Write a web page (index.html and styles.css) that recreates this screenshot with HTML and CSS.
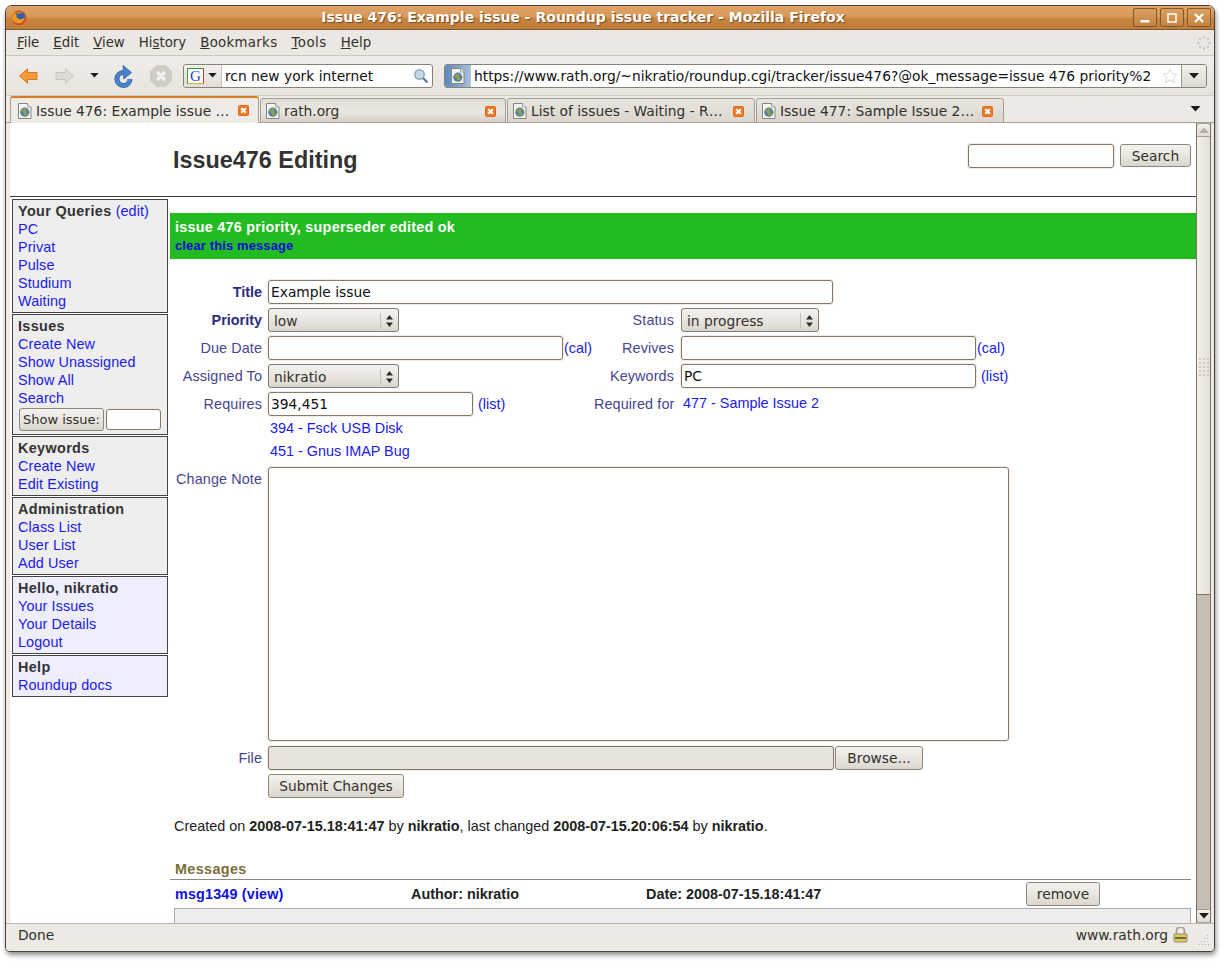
FILE: index.html
```html
<!DOCTYPE html>
<html lang="en">
<head>
    <meta charset="UTF-8">
    <title>Issue 476: Example issue - Roundup issue tracker - Mozilla Firefox</title>
    <link rel="stylesheet" href="styles.css">
</head>
<body>
    <svg class="defs" width="0" height="0">
        <symbol id="favicon" viewBox="0 0 16 16">
            <path d="M1.500 .5h9l3.500 3.500v11.500h-12.500z" fill="#f4f4f2" stroke="#85857f"/>
            <path d="M10.500 .5v3.500h3.500" fill="#fff" stroke="#9a9a9a"/>
            <circle cx="7.800" cy="9.200" r="4.600" fill="#55809f"/>
            <path d="M4.500 8c1-2.200 3.200-2.700 5-1.700.9.900-.5 1.300-.5 2.400s1.700.9 2 1.700c-.6 1.700-2.200 2.400-3.600 2.200-1.100-1.100-.4-2-1.100-3-.6-.6-1.400-.6-1.800-1.600z" fill="#8aa04e"/>
        </symbol>
        <symbol id="tabclose" viewBox="0 0 11 11">
            <rect x=".5" y=".5" width="10" height="10" rx="1" fill="#f0782a" stroke="#e46a16"/>
            <path d="M3.200 3.200l4.600 4.600M7.800 3.200l-4.600 4.600" stroke="#fff" stroke-width="2"/>
        </symbol>
        <symbol id="updown" viewBox="0 0 9 14">
            <path d="M4.500 1l3.500 4.500h-7zM4.500 13l-3.500-4.500h7z" fill="#2e2e2e"/>
        </symbol>
        <symbol id="down" viewBox="0 0 10 6">
            <path d="M0 0h10l-5 5.500z" fill="#1c1c1c"/>
        </symbol>
    </svg>

    <div class="window">
        <div class="titlebar">
            <svg class="fox" width="16" height="16" viewBox="0 0 16 16">
                <circle cx="8" cy="8" r="7.500" fill="#c8541a"/>
                <circle cx="8.800" cy="6.500" r="5" fill="#2f5fa8"/>
                <path d="M.8 8.500c.4-3 1.700-5.300 3.700-6.500-.5 1.500 0 2.500 1.500 3-1 1-.5 3 1.500 4 2 .8 4 .2 6-1.800-.2 3.500-3 6.300-6.300 6.100-3.200-.2-5.800-2-6.400-4.800z" fill="#ee9a22"/>
                <path d="M5 2.500c2-1.200 5-1.200 7 .8-2 .2-3.500 0-4.500.7-1 .2-2-.5-2.500-1.500z" fill="#e8791e"/>
            </svg>
            <div class="title-text">Issue 476: Example issue - Roundup issue tracker - Mozilla Firefox</div>
            <div class="wm-buttons">
                <div class="wm-btn"><svg width="12" height="12" viewBox="0 0 12 12"><rect x="1.500" y="8" width="9" height="2.500" fill="#fff"/></svg></div>
                <div class="wm-btn"><svg width="12" height="12" viewBox="0 0 12 12"><rect x="2" y="2" width="8" height="8" fill="none" stroke="#fff" stroke-width="1.500"/></svg></div>
                <div class="wm-btn"><svg width="12" height="12" viewBox="0 0 12 12"><path d="M2 2l8 8M10 2l-8 8" stroke="#fff" stroke-width="2.400"/></svg></div>
            </div>
        </div>

        <div class="menubar">
            <span><u>F</u>ile</span>
            <span><u>E</u>dit</span>
            <span><u>V</u>iew</span>
            <span>Hi<u>s</u>tory</span>
            <span class="menu-wide"><u>B</u>ookmarks</span>
            <span class="menu-wider"><u>T</u>ools</span>
            <span><u>H</u>elp</span>
            <svg class="throbber" width="14" height="14" viewBox="0 0 14 14">
                <g fill="#c9c6c0">
                    <circle cx="7" cy="1.500" r="1.200"/><circle cx="11" cy="3" r="1.200"/><circle cx="12.500" cy="7" r="1.200"/>
                    <circle cx="11" cy="11" r="1.200"/><circle cx="7" cy="12.500" r="1.200"/><circle cx="3" cy="11" r="1.200"/>
                    <circle cx="1.500" cy="7" r="1.200"/><circle cx="3" cy="3" r="1.200"/>
                </g>
            </svg>
        </div>

        <div class="toolbar">
            <svg class="tb-back" width="19" height="16" viewBox="0 0 19 16">
                <path d="M8.500 .8v3.700h9.500v7h-9.500v3.700l-8-7.200z" fill="#f39a3a" stroke="#d77a20"/>
            </svg>
            <svg class="tb-forward" width="19" height="16" viewBox="0 0 19 16">
                <path d="M10.500 .8v3.700h-9.500v7h9.500v3.700l8-7.200z" fill="#dedbd5" stroke="#c9c6c0"/>
            </svg>
            <svg class="tb-drop" width="9" height="5"><use href="#down"/></svg>
            <svg class="tb-reload" width="20" height="24" viewBox="0 0 20 24">
                <path d="M16 15a6.500 6.500 0 1 1-7-6.500" fill="none" stroke="#2f5f9f" stroke-width="5"/>
                <path d="M16 15a6.500 6.500 0 1 1-7-6.500" fill="none" stroke="#4a84cc" stroke-width="3.400"/>
                <path d="M9 1.500l.8 13.500 7.700-6.500z" fill="#4a84cc" stroke="#2f5f9f" stroke-width=".8"/>
            </svg>
            <svg class="tb-stop" width="24" height="24" viewBox="0 0 24 24">
                <path d="M7.500 1h9l6.500 6.500v9l-6.500 6.500h-9l-6.500-6.500v-9z" fill="#cfcbc5"/>
                <path d="M8 8l8 8M16 8l-8 8" stroke="#f2f0ec" stroke-width="3.200"/>
            </svg>
            <div class="searchbox">
                <div class="engine">
                    <span class="g-icon">G</span>
                    <svg width="9" height="5"><use href="#down"/></svg>
                </div>
                <div class="box-text">rcn new york internet</div>
                <svg width="16" height="16" viewBox="0 0 16 16">
                    <circle cx="6.500" cy="6.500" r="4.800" fill="#c5d8ea" stroke="#8d9aa6" stroke-width="1.200"/>
                    <path d="M10 10l4.500 4.500" stroke="#5d7ea3" stroke-width="2.400"/>
                </svg>
            </div>
            <div class="urlbar">
                <div class="site-id"><svg width="16" height="16"><use href="#favicon"/></svg></div>
                <div class="box-text url-text">https://www.rath.org/~nikratio/roundup.cgi/tracker/issue476?@ok_message=issue 476 priority%2</div>
                <svg class="star" width="16" height="16" viewBox="0 0 16 16">
                    <path d="M8 1l2.100 4.700 5 .5-3.800 3.300 1.100 5-4.400-2.600-4.400 2.600 1.100-5-3.800-3.300 5-.5z" fill="#fff" stroke="#d9d7d2"/>
                </svg>
                <div class="url-drop"><svg width="10" height="6"><use href="#down"/></svg></div>
            </div>
        </div>

        <div class="tabstrip">
            <div class="tab tab-active">
                <svg width="16" height="16"><use href="#favicon"/></svg>
                <span class="tab-label">Issue 476: Example issue …</span>
                <svg class="tab-x" width="11" height="11"><use href="#tabclose"/></svg>
            </div>
            <div class="tab tab-rath">
                <svg width="16" height="16"><use href="#favicon"/></svg>
                <span class="tab-label">rath.org</span>
                <svg class="tab-x" width="11" height="11"><use href="#tabclose"/></svg>
            </div>
            <div class="tab">
                <svg width="16" height="16"><use href="#favicon"/></svg>
                <span class="tab-label">List of issues - Waiting - R…</span>
                <svg class="tab-x" width="11" height="11"><use href="#tabclose"/></svg>
            </div>
            <div class="tab">
                <svg width="16" height="16"><use href="#favicon"/></svg>
                <span class="tab-label">Issue 477: Sample Issue 2…</span>
                <svg class="tab-x" width="11" height="11"><use href="#tabclose"/></svg>
            </div>
            <svg class="tabs-drop" width="11" height="6"><use href="#down"/></svg>
        </div>

        <div class="viewport">
            <div class="page">
                <div class="page-head">
                    <h1>Issue476 Editing</h1>
                    <div class="page-search">
                        <input type="text" class="field search-field">
                        <button class="btn search-btn">Search</button>
                    </div>
                </div>

                <div class="page-body">
                    <div class="sidebar">
                        <div class="side-box">
                            <div><b>Your Queries</b> <a href="#">(edit)</a></div>
                            <a href="#">PC</a>
                            <a href="#">Privat</a>
                            <a href="#">Pulse</a>
                            <a href="#">Studium</a>
                            <a href="#">Waiting</a>
                        </div>
                        <div class="side-box">
                            <div><b>Issues</b></div>
                            <a href="#">Create New</a>
                            <a href="#">Show Unassigned</a>
                            <a href="#">Show All</a>
                            <a href="#">Search</a>
                            <div class="show-issue">
                                <button class="btn show-btn">Show issue:</button>
                                <input type="text" class="field show-field">
                            </div>
                        </div>
                        <div class="side-box">
                            <div><b>Keywords</b></div>
                            <a href="#">Create New</a>
                            <a href="#">Edit Existing</a>
                        </div>
                        <div class="side-box">
                            <div><b>Administration</b></div>
                            <a href="#">Class List</a>
                            <a href="#">User List</a>
                            <a href="#">Add User</a>
                        </div>
                        <div class="side-box side-user">
                            <div><b>Hello, nikratio</b></div>
                            <a href="#">Your Issues</a>
                            <a href="#">Your Details</a>
                            <a href="#">Logout</a>
                        </div>
                        <div class="side-box side-user">
                            <div><b>Help</b></div>
                            <a href="#">Roundup docs</a>
                        </div>
                    </div>

                    <div class="content">
                        <div class="ok-message">
                            <div class="ok-text">issue 476 priority, superseder edited ok</div>
                            <a href="#">clear this message</a>
                        </div>

                        <div class="issue-form">
                            <label class="required">Title</label>
                            <div class="cell span-3"><input type="text" class="field title-field" value="Example issue"></div>

                            <label class="required">Priority</label>
                            <div class="cell">
                                <div class="select"><span>low</span><i></i><svg width="9" height="14"><use href="#updown"/></svg></div>
                            </div>
                            <label class="right-label">Status</label>
                            <div class="cell">
                                <div class="select select-wide"><span>in progress</span><i></i><svg width="9" height="14"><use href="#updown"/></svg></div>
                            </div>

                            <label>Due Date</label>
                            <div class="cell"><input type="text" class="field date-field"><a class="cal" href="#">(cal)</a></div>
                            <label class="right-label">Revives</label>
                            <div class="cell"><input type="text" class="field date-field"><a class="cal" href="#">(cal)</a></div>

                            <label>Assigned To</label>
                            <div class="cell">
                                <div class="select"><span>nikratio</span><i></i><svg width="9" height="14"><use href="#updown"/></svg></div>
                            </div>
                            <label class="right-label">Keywords</label>
                            <div class="cell"><input type="text" class="field date-field" value="PC"><a class="list" href="#">(list)</a></div>

                            <label>Requires</label>
                            <div class="cell"><input type="text" class="field req-field" value="394,451"><a class="list" href="#">(list)</a></div>
                            <label class="right-label">Required for</label>
                            <div class="cell"><a class="dep-top" href="#">477 - Sample Issue 2</a></div>

                            <div></div>
                            <div class="req-links span-3">
                                <a href="#">394 - Fsck USB Disk</a>
                                <a href="#">451 - Gnus IMAP Bug</a>
                            </div>

                            <label class="note-label">Change Note</label>
                            <div class="cell span-3"><textarea class="field note-field"></textarea></div>

                            <label>File</label>
                            <div class="cell span-3"><input type="text" class="field file-field"><button class="btn browse-btn">Browse...</button></div>

                            <div></div>
                            <div class="cell span-3"><button class="btn submit-btn">Submit Changes</button></div>
                        </div>

                        <p class="stamp">Created on <b>2008-07-15.18:41:47</b> by <b>nikratio</b>, last changed <b>2008-07-15.20:06:54</b> by <b>nikratio</b>.</p>

                        <div class="messages">
                            <div class="msg-title">Messages</div>
                            <div class="msg-row">
                                <a class="msg-link" href="#">msg1349 (view)</a>
                                <b class="msg-author">Author: nikratio</b>
                                <b class="msg-date">Date: 2008-07-15.18:41:47</b>
                                <button class="btn remove-btn">remove</button>
                            </div>
                            <div class="msg-body"></div>
                        </div>
                    </div>
                </div>
            </div>

            <div class="scrollbar">
                <div class="sb-btn"><svg width="10" height="6" viewBox="0 0 10 6"><path d="M0 6h10l-5-5.500z" fill="#b5afa6"/></svg></div>
                <div class="sb-thumb">
                    <svg width="10" height="18" viewBox="0 0 10 18">
                        <g fill="#cfc9c0">
                            <rect x="0" y="0" width="2" height="2"/><rect x="4" y="0" width="2" height="2"/><rect x="8" y="0" width="2" height="2"/>
                            <rect x="0" y="4" width="2" height="2"/><rect x="4" y="4" width="2" height="2"/><rect x="8" y="4" width="2" height="2"/>
                            <rect x="0" y="8" width="2" height="2"/><rect x="4" y="8" width="2" height="2"/><rect x="8" y="8" width="2" height="2"/>
                            <rect x="0" y="12" width="2" height="2"/><rect x="4" y="12" width="2" height="2"/><rect x="8" y="12" width="2" height="2"/>
                            <rect x="0" y="16" width="2" height="2"/><rect x="4" y="16" width="2" height="2"/><rect x="8" y="16" width="2" height="2"/>
                        </g>
                    </svg>
                </div>
                <div class="sb-trough"></div>
                <div class="sb-btn sb-btn-down"><svg width="10" height="6"><use href="#down"/></svg></div>
            </div>
        </div>

        <div class="statusbar">
            <span class="status-left">Done</span>
            <span class="status-host">www.rath.org</span>
            <svg width="15" height="16" viewBox="0 0 15 16">
                <path d="M3.500 7v-3a4 4 0 0 1 8 0v3" fill="none" stroke="#a3a19b" stroke-width="1.800"/>
                <rect x="1" y="7" width="13" height="8" rx="1" fill="#e5c94a" stroke="#8c8a80"/>
                <rect x="2" y="10" width="11" height="2" fill="#6e6a52"/>
            </svg>
            <svg class="grip" width="10" height="10" viewBox="0 0 10 10">
                <g fill="#b9b5ad">
                    <rect x="8" y="0" width="1" height="1"/><rect x="5" y="3" width="1" height="1"/><rect x="8" y="3" width="1" height="1"/>
                    <rect x="2" y="6" width="1" height="1"/><rect x="5" y="6" width="1" height="1"/><rect x="8" y="6" width="1" height="1"/>
                    <rect x="0" y="9" width="1" height="1"/><rect x="3" y="9" width="1" height="1"/><rect x="6" y="9" width="1" height="1"/><rect x="9" y="9" width="1" height="1"/>
                </g>
            </svg>
        </div>
    </div>
</body>
</html>
```

FILE: styles.css
```css
* {
    box-sizing: border-box;
}

html, body {
    height: 100%;
}

body {
    margin: 0;
    background: #fff;
    font-family: "DejaVu Sans", sans-serif;
    font-size: 13.8px;
    color: #2e2e2e;
    overflow: hidden;
}

.defs {
    position: absolute;
}

a {
    color: #1a1aee;
    text-decoration: none;
}

/* window frame */
.window {
    width: 1210px;
    height: 947px;
    margin: 5px 0 0 5px;
    display: flex;
    flex-direction: column;
    background: #edeae5;
    border: 1px solid #4a4238;
    border-radius: 7px 7px 5px 5px;
    box-shadow: 1px 3px 5px rgba(0, 0, 0, 0.45);
    overflow: hidden;
}

.titlebar {
    height: 24px;
    flex: none;
    display: flex;
    align-items: center;
    padding: 0 3px 0 5px;
    background: linear-gradient(#dfa264, #d9995a 45%, #c8853f 55%, #c07c3a);
    border-bottom: 1px solid #7f5a30;
}

.fox {
    flex: none;
}

.title-text {
    flex: 1;
    padding: 0 0 2px 6px;
    text-align: center;
    color: #fff;
    font-size: 14px;
    font-weight: bold;
    text-shadow: 1px 1px 1px #6e4a22;
    white-space: nowrap;
}

.wm-buttons {
    display: flex;
    gap: 3px;
}

.wm-btn {
    width: 24px;
    height: 19px;
    display: flex;
    align-items: center;
    justify-content: center;
    border: 1px solid #82592c;
    border-radius: 2px;
    background: linear-gradient(#dca063, #c38240);
}

.menubar {
    height: 26px;
    flex: none;
    display: flex;
    align-items: center;
    gap: 14px;
    padding-left: 11px;
    font-size: 13.33px;
    background: #ebe8e3;
    border-bottom: 1px solid #cdc9c1;
    color: #33302b;
}

.menu-wide {
    letter-spacing: 0.3px;
}

.menu-wider {
    letter-spacing: 0.5px;
}

.throbber {
    margin-left: auto;
    margin-right: 3px;
}

/* navigation toolbar */
.toolbar {
    height: 40px;
    flex: none;
    display: flex;
    align-items: center;
    padding: 0 7px 0 13px;
    background: linear-gradient(#f0eeea, #e6e3dd);
    border-bottom: 1px solid #d2cec7;
}

.tb-forward {
    margin-left: 17px;
}

.tb-drop {
    margin-left: 16px;
}

.tb-reload {
    margin-left: 15px;
}

.tb-stop {
    margin-left: 15px;
}

.searchbox, .urlbar {
    height: 24px;
    display: flex;
    align-items: center;
    background: #fff;
    border: 1px solid #8a8176;
    border-radius: 3px;
    color: #111;
    overflow: hidden;
}

.searchbox {
    width: 250px;
    margin-left: 10px;
    padding-right: 3px;
}

.engine {
    width: 38px;
    height: 22px;
    flex: none;
    display: flex;
    align-items: center;
    gap: 4px;
    padding-left: 3px;
    background: linear-gradient(#f3f1ee, #e1ddd7);
    border-right: 1px solid #c7c2ba;
}

.g-icon {
    width: 17px;
    height: 16px;
    font-family: "Liberation Serif", serif;
    font-size: 15px;
    line-height: 14px;
    text-align: center;
    color: #2346c0;
    background: #fff;
    border: 1px solid #3a9a3a;
    border-right-color: #c83a2a;
    border-bottom-color: #d8b020;
}

.box-text {
    flex: 1;
    padding: 1px 0 0 3px;
    white-space: nowrap;
}

.urlbar {
    width: 763px;
    margin-left: 11px;
}

.site-id {
    width: 26px;
    height: 22px;
    flex: none;
    display: flex;
    align-items: center;
    justify-content: center;
    background: linear-gradient(90deg, #5f86bd, #a9c0de);
}

.url-text {
    padding-left: 3px;
    overflow: hidden;
}

.star {
    flex: none;
    margin: 0 3px 0 5px;
}

.url-drop {
    width: 25px;
    height: 22px;
    flex: none;
    display: flex;
    align-items: center;
    justify-content: center;
    background: linear-gradient(#f3f1ee, #dcd8d1);
    border-left: 1px solid #a09a90;
}

/* tabs */
.tabstrip {
    height: 27px;
    flex: none;
    display: flex;
    align-items: flex-end;
    padding-left: 4px;
    background: #edeae5;
    border-bottom: 1px solid #a89f94;
}

.tab {
    width: 248px;
    height: 25px;
    display: flex;
    align-items: center;
    gap: 3px;
    padding-left: 4px;
    padding-top: 1px;
    margin-right: 1px;
    margin-bottom: -1px;
    color: #33302b;
    background: linear-gradient(#e8e5df, #dad6cf);
    border: 1px solid #a89f94;
    border-radius: 3px 3px 0 0;
    flex: none;
}

.tab-active {
    width: 249px;
    height: 27px;
    padding-left: 6px;
    padding-top: 0;
    background: #eeebe6;
    border-color: #a89f94;
    border-top: 2px solid #d97a28;
    border-bottom: none;
}

.tab-rath {
    width: 246px;
    background: linear-gradient(#dedad4, #e8e5df 35%, #e8e5df 60%, #d3cfc8);
}

.tab-label {
    flex: 1;
    white-space: nowrap;
}

.tab-x {
    flex: none;
    margin-right: 10px;
}

.tab-active .tab-x, .tab-rath .tab-x {
    margin-right: 9px;
}

.tabs-drop {
    margin-left: auto;
    margin-right: 13px;
    margin-bottom: 10px;
}

/* page area */
.viewport {
    flex: 1;
    min-height: 0;
    display: flex;
    margin: 0 3px 0 4px;
}

.page {
    flex: 1;
    min-width: 0;
    background: #fff;
    overflow: hidden;
    font-family: "Liberation Sans", sans-serif;
    font-size: 14.4px;
    line-height: 18px;
    color: #222;
}

.page-head {
    height: 74px;
    display: flex;
    align-items: flex-start;
    justify-content: space-between;
    padding: 21px 5px 0 163px;
    border-bottom: 1px solid #3c3c3c;
}

h1 {
    margin: 2px 0 0;
    font-size: 23.4px;
    line-height: 28px;
    color: #333;
}

.page-search {
    display: flex;
    gap: 6px;
}

.field {
    height: 24px;
    padding: 0 2px;
    font-family: "DejaVu Sans", sans-serif;
    font-size: 13.8px;
    color: #111;
    background: #fff;
    border: 1px solid #85796b;
    border-radius: 3px;
    outline: none;
    box-shadow: 0 0 0 1px #efece8;
}

.btn {
    height: 24px;
    padding: 0;
    font-family: "DejaVu Sans", sans-serif;
    font-size: 13.8px;
    color: #33302b;
    background: linear-gradient(#f4f2ef, #e9e6e1 50%, #dad6cf);
    border: 1px solid #8f8679;
    border-radius: 3px;
}

.search-field {
    width: 146px;
}

.search-btn {
    width: 71px;
    height: 23px;
}

.page-body {
    display: flex;
    gap: 2px;
}

/* left menu */
.sidebar {
    width: 156px;
    flex: none;
    margin: 2px 0 0 2px;
}

.side-box {
    padding: 2px 5px;
    margin-bottom: 1px;
    background: #eee;
    border: 1px solid #444;
    letter-spacing: 0.1px;
}

.side-box a {
    display: block;
}

.side-box div a {
    display: inline;
}

.side-box b {
    color: #333;
    letter-spacing: 0.35px;
}

.side-user {
    background: #eef;
}

.show-issue {
    display: flex;
    gap: 2px;
    height: 25px;
    padding: 1px 0 0 1px;
}

.show-btn {
    width: 85px;
    height: 23px;
    font-size: 13px;
    letter-spacing: 0;
}

.show-field {
    width: 55px;
    height: 21px;
    margin-top: 1px;
}

/* main column */
.content {
    flex: 1;
    min-width: 0;
    padding-top: 16px;
}

.ok-message {
    height: 46px;
    padding: 5px;
    background: #22bb22;
    font-size: 14.4px;
    font-weight: bold;
}

.ok-text {
    color: #fff;
    letter-spacing: 0.25px;
}

.ok-message a {
    color: #0c0cd8;
    font-size: 12.9px;
    letter-spacing: 0.17px;
}

.issue-form {
    display: grid;
    grid-template-columns: 92px 320px 81px auto;
    column-gap: 6px;
    row-gap: 4px;
    margin-top: 21px;
    width: 840px;
}

.issue-form label {
    line-height: 24px;
    text-align: right;
    color: #45458f;
    white-space: nowrap;
    letter-spacing: 0.1px;
}

.issue-form .right-label {
    padding-right: 1px;
}

.issue-form .required {
    font-weight: bold;
    color: #2c2c80;
    letter-spacing: 0;
}

.cell {
    display: flex;
    align-items: flex-start;
    line-height: 24px;
    min-height: 24px;
    white-space: nowrap;
}

.span-3 {
    grid-column: span 3;
}

.title-field {
    width: 565px;
}

.select {
    width: 131px;
    height: 24px;
    display: flex;
    align-items: center;
    padding: 1px 4px 0 5px;
    font-family: "DejaVu Sans", sans-serif;
    font-size: 13.8px;
    color: #33302b;
    background: linear-gradient(#f4f2ef, #e9e6e1 50%, #dad6cf);
    border: 1px solid #85796b;
    border-radius: 3px;
}

.select-wide {
    width: 138px;
}

.select span {
    flex: 1;
}

.select i {
    width: 1px;
    height: 16px;
    background: #c4c0b8;
    margin-right: 4px;
}

.date-field {
    width: 295px;
    flex: none;
}

.cal {
    margin-left: 1px;
}

.list {
    margin-left: 5px;
}

.req-field {
    width: 205px;
    flex: none;
}

.dep-top {
    margin-left: 2px;
    line-height: 22px;
}

.req-links {
    height: 46px;
    margin-top: -3px;
    padding-left: 2px;
}

.req-links a {
    display: block;
    line-height: 23px;
}

.note-field {
    width: 741px;
    height: 274px;
    margin-bottom: 1px;
    resize: none;
}

.file-field {
    width: 566px;
    background: #e8e3dc;
}

.browse-btn {
    width: 88px;
    margin-left: 1px;
}

.submit-btn {
    width: 136px;
}

.stamp {
    margin: 19px 0 0 4px;
}

.messages {
    margin-top: 26px;
    width: 1021px;
}

.msg-title {
    height: 19px;
    padding-left: 5px;
    line-height: 16px;
    font-weight: bold;
    color: #7a6f3a;
    letter-spacing: 0.35px;
    border-bottom: 1px solid #888;
}

.msg-row {
    height: 28px;
    display: flex;
    align-items: center;
}

.msg-link {
    width: 241px;
    padding-left: 5px;
    font-weight: bold;
    color: #1010e0;
    letter-spacing: 0.15px;
}

.msg-author {
    width: 235px;
}

.msg-date {
    width: 380px;
}

.remove-btn {
    width: 74px;
}

.msg-body {
    height: 60px;
    margin-left: 4px;
    background: #eee;
    border: 1px solid #aaa;
}

/* scrollbar */
.scrollbar {
    width: 15px;
    flex: none;
    display: flex;
    flex-direction: column;
    background: #c6beb4;
    border-left: 1px solid #7d7264;
    border-right: 1px solid #7d7264;
}

.sb-btn {
    height: 14px;
    flex: none;
    display: flex;
    align-items: center;
    justify-content: center;
    background: linear-gradient(#f1efeb, #e0dcd5);
    border-top: 1px solid #a89f94;
    border-bottom: 1px solid #a89f94;
    border-radius: 3px 3px 0 0;
}

.sb-btn-down {
    border-radius: 0 0 3px 3px;
}

.sb-thumb {
    height: 458px;
    flex: none;
    display: flex;
    align-items: flex-start;
    justify-content: center;
    padding-top: 221px;
    background: linear-gradient(90deg, #f3f0ec, #e3dfd8);
    border-bottom: 1px solid #7d7264;
}

.sb-trough {
    flex: 1;
}

/* status bar */
.statusbar {
    height: 28px;
    flex: none;
    display: flex;
    align-items: center;
    padding: 0 5px 5px 12px;
    background: #edeae5;
    border-top: 1px solid #b9b5ad;
    color: #33302b;
}

.status-left {
    flex: 1;
}

.status-host {
    margin-right: 5px;
}

.grip {
    margin-left: 11px;
    margin-top: 9px;
}
```
